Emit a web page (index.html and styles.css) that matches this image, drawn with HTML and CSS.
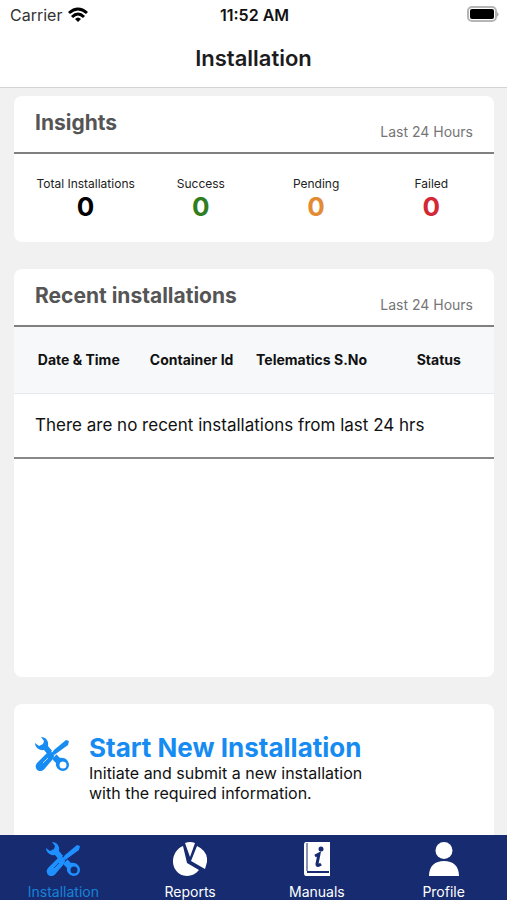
FILE: index.html
```html
<!DOCTYPE html>
<html lang="en">
<head>
<meta charset="utf-8">
<meta name="viewport" content="width=device-width, initial-scale=1">
<title>Installation</title>
<link rel="stylesheet" href="styles.css">
</head>
<body>
<svg class="symbols" aria-hidden="true">
  <symbol id="tools" viewBox="0 0 34 34">
    <path fill="currentColor" d="M6 0C11 0 14 4 13 9L18 15L14 19L9 13C4 14 0 10 0 6L4 9L8 7L9 4Z"/>
    <path fill="currentColor" fill-rule="evenodd" d="M18 20L21 17L25 21C30 20 34 24 34 28C34 31 31 34 28 34C24 34 20 30 21 26L18 23ZM28 24.500A3.500 3.500 0 1 0 28 31.500A3.500 3.500 0 1 0 28 24.500Z"/>
    <path class="gap" d="M20 13L13 17L17 22L22 16Z"/>
    <path fill="currentColor" d="M31 3L34 4L33 8L22 16L19 18L17 16L19 13Z"/>
    <path fill="currentColor" d="M12 16Q15 14 18 16Q20 19 18 22L9 32.500C4 37-2 31 2 26Z"/>
    <path class="groove" d="M8 26L13 21"/>
  </symbol>
</svg>
<div class="status">
  <div class="carrier">Carrier
    <svg width="20" height="16" viewBox="0 0 20 16" aria-hidden="true">
      <g fill="none" stroke="#000" stroke-width="3"><path d="M1 6Q10-2 19 6M4 10Q10 4 16 10"/></g>
      <path d="M7 12Q10 9 13 12L10 15Z"/>
    </svg>
  </div>
  <div class="time">11:52 AM</div>
  <svg class="battery" width="32" height="18" viewBox="0 0 32 18" aria-hidden="true">
    <rect x="1" y="1" width="28" height="14" rx="4" fill="#fff" stroke="#b5b5b5" stroke-width="2"/>
    <rect x="3" y="3" width="24" height="10" rx="2"/>
    <path fill="#aaa" d="M30 6Q33 8 30 11Z"/>
  </svg>
</div>
<header class="titlebar"><h1>Installation</h1></header>
<main>
  <section class="card insights">
    <div class="card-head"><h2>Insights</h2><span>Last 24 Hours</span></div>
    <dl class="stats">
      <div><dt>Total Installations</dt><dd>0</dd></div>
      <div><dt>Success</dt><dd class="success">0</dd></div>
      <div><dt>Pending</dt><dd class="pending">0</dd></div>
      <div><dt>Failed</dt><dd class="failed">0</dd></div>
    </dl>
  </section>
  <section class="card recent">
    <div class="card-head"><h2>Recent installations</h2><span>Last 24 Hours</span></div>
    <table>
      <thead><tr><th class="date">Date &amp; Time</th><th class="container">Container Id</th><th class="serial">Telematics S.No</th><th>Status</th></tr></thead>
      <tbody><tr><td colspan="4">There are no recent installations from last 24 hrs</td></tr></tbody>
    </table>
  </section>
  <a class="card start" href="#new">
    <svg width="34" height="34" aria-hidden="true"><use href="#tools"/></svg>
    <div><h2>Start New Installation</h2><p>Initiate and submit a new installation<br>with the required information.</p></div>
  </a>
</main>
<nav>
  <a class="active" href="#installation"><svg width="34" height="34" aria-hidden="true"><use href="#tools"/></svg>Installation</a>
  <a href="#reports"><svg width="34" height="34" viewBox="0 0 34 34" fill="currentColor" aria-hidden="true"><path d="M12 1Q17-1 22 1L17 15ZM24 4Q35 9 34 20L32 27L18 19ZM10 4L14 21L26 28C20 36 7 36 2 27C-3 18 2 7 10 4Z"/></svg>Reports</a>
  <a href="#manuals"><svg width="34" height="34" viewBox="0 0 34 34" aria-hidden="true"><path fill="currentColor" d="M6 0H30V34H6Q4 34 4 31V3Q4 0 6 0Z"/><path class="spine" d="M7 1V29"/><path class="ink" d="M7 30H29"/><circle class="dot" cx="21" cy="7" r="2.500"/><path class="letter" d="M15 14L19 12L17 22Q17 25 21 22"/></svg>Manuals</a>
  <a href="#profile"><svg width="34" height="34" viewBox="0 0 34 34" fill="currentColor" aria-hidden="true"><circle cx="17" cy="8.500" r="8.500"/><path d="M2 34C2 24 8 19 17 19S32 24 32 34Z"/></svg>Profile</a>
</nav>
</body>
</html>
```
FILE: styles.css
```css
* { box-sizing: border-box; }
body {
  margin: 0;
  height: 100vh;
  display: flex;
  flex-direction: column;
  background: #f1f1f1;
  color: #111;
  font-family: Inter, "Liberation Sans", sans-serif;
}
h1, h2, p, dl, dd { margin: 0; }
a { color: inherit; text-decoration: none; }
.symbols { position: absolute; width: 0; height: 0; }
.gap { fill: none; stroke: var(--back); stroke-width: 1; }
.groove { fill: none; stroke: var(--back); stroke-width: 1; opacity: 0.7; }
.status {
  display: grid;
  grid-template-columns: 1fr auto 1fr;
  align-items: center;
  height: 30px;
  padding: 0 8px 0 10px;
  background: #fff;
  font-size: 16px;
  flex: none;
}
.carrier { display: flex; align-items: center; gap: 6px; color: #333; }
.time { font-weight: 600; }
.battery { justify-self: end; }
.titlebar {
  height: 58px;
  flex: none;
  background: #fff;
  border-bottom: 1px solid #d4d4d4;
  text-align: center;
}
h1 { font-size: 22px; line-height: 56px; font-weight: 600; color: #1c1c1e; }
main {
  flex: 1;
  min-height: 0;
  overflow: hidden;
  padding: 8px 13px 0 14px;
  display: flex;
  flex-direction: column;
  gap: 27px;
}
.card { flex: none; background: #fff; border-radius: 8px; overflow: hidden; }
.insights { height: 146px; }
.recent { height: 408px; }
.card-head {
  height: 58px;
  padding: 0 21px;
  display: flex;
  justify-content: space-between;
  border-bottom: 2px solid #808080;
}
.card-head h2 { font-size: 21px; line-height: 54px; font-weight: 700; color: #555; }
.card-head span { font-size: 14px; line-height: 72px; color: #757575; }
.stats {
  display: grid;
  grid-template-columns: repeat(4, 1fr);
  padding: 22px 5px 0 14px;
  text-align: center;
}
dt { font-size: 12px; line-height: 16px; color: #222; white-space: nowrap; }
dd { font-size: 26px; line-height: 30px; font-weight: 700; color: #000; }
.success { color: #2f7d1e; }
.pending { color: #e38b33; }
.failed { color: #d42735; }
table { width: 100%; border-collapse: collapse; table-layout: fixed; }
th {
  height: 66px;
  padding: 0;
  background: #f6f8fa;
  border-bottom: 1px solid #e6e9ec;
  font-size: 14px;
  font-weight: 700;
  white-space: nowrap;
}
.date { width: 27%; }
.container { width: 20%; }
.serial { width: 30%; }
td { height: 65px; padding: 0 21px; border-bottom: 2px solid #888; font-size: 17px; }
.start { --back: #fff; display: flex; gap: 20px; height: 160px; padding: 29px 21px; }
.start svg { margin-top: 4px; color: #168bf2; }
.start h2 { font-size: 26px; line-height: 30px; font-weight: 700; color: #168bf2; }
.start p { font-size: 16px; line-height: 20px; }
nav {
  --back: #162b70;
  flex: none;
  height: 65px;
  display: grid;
  grid-template-columns: repeat(4, 1fr);
  overflow: hidden;
  background: #162b70;
  color: #fff;
}
nav a { display: flex; flex-direction: column; align-items: center; gap: 7px; padding-top: 7px; font-size: 14px; line-height: 18px; }
nav svg { flex: none; }
nav .active { color: #1683d8; }
nav .active svg { color: #1e90ff; }
.spine { fill: none; stroke: #162b70; stroke-width: 1; }
.ink { fill: none; stroke: #162b70; stroke-width: 2; }
.dot { fill: #162b70; }
.letter { fill: none; stroke: #162b70; stroke-width: 3; }
```
